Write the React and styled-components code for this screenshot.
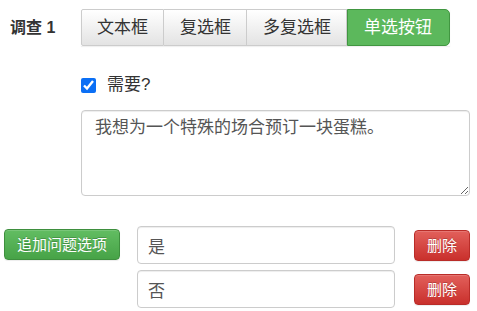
import React from 'react';
import styled, { createGlobalStyle } from 'styled-components';

const GlobalStyle = createGlobalStyle`
  body {
    margin: 0;
    background: #fff;
    font-family: "Liberation Sans", "Noto Sans CJK SC", sans-serif;
    color: #333;
  }
`;

const Page = styled.div`
  width: 477px;
  padding-top: 9px;
`;

const FormRow = styled.div`
  display: flex;
  align-items: center;
  height: 37px;
`;

const RowLabel = styled.label`
  width: 81px;
  box-sizing: border-box;
  padding-left: 10px;
  font-size: 16px;
  line-height: 20px;
  font-weight: bold;
  color: #333;
`;

const BtnGroup = styled.div`
  display: flex;
  box-shadow: 0 1px 1px rgba(0, 0, 0, 0.06);
`;

const TypeButton = styled.button`
  height: 37px;
  padding: 0 ${props => (props.$active ? 17 : 15)}px 0 ${props => (props.$first ? 15 : 16)}px;
  font-family: inherit;
  font-size: 17px;
  line-height: 35px;
  border: 1px solid ${props => (props.$active ? '#419641' : '#ccc')};
  border-left-width: ${props => (props.$first || props.$active ? 1 : 0)}px;
  color: ${props => (props.$active ? '#fff' : '#333')};
  background: ${props => (props.$active ? '#5cb85c' : 'linear-gradient(to bottom, #fff 0%, #e3e3e3 100%)')};
  border-radius: ${props => (props.$active ? '0 5px 5px 0' : props.$first ? '2px 0 0 2px' : '0')};
  cursor: pointer;
`;

const Indent = styled.div`
  margin-left: 81px;
`;

const CheckRow = styled.label`
  display: flex;
  align-items: center;
  height: 20px;
  margin-top: 29px;
  font-size: 17px;
  line-height: 20px;
  color: #333;
`;

const Check = styled.input`
  width: 15px;
  height: 15px;
  margin: 0 11px 0 0;
  accent-color: #0b6ff5;
`;

const TextArea = styled.textarea`
  display: block;
  box-sizing: border-box;
  width: 389px;
  height: 86px;
  margin-top: 15px;
  padding: 5px 13px;
  border: 1px solid #ccc;
  border-radius: 4px;
  font-family: inherit;
  font-size: 17px;
  line-height: 24px;
  color: #555;
  box-shadow: inset 0 1px 1px rgba(0, 0, 0, 0.075);
  outline: none;
`;

const OptionsSection = styled.div`
  display: flex;
  align-items: flex-start;
  margin-top: 30px;
`;

const AddColumn = styled.div`
  width: 137px;
  box-sizing: border-box;
  padding: 3px 0 0 4px;
`;

const ColorButton = styled.button`
  height: 31px;
  padding: 0 ${props => props.$pad}px;
  font-family: inherit;
  font-size: 15px;
  line-height: 29px;
  color: #fff;
  border: 1px solid ${props => (props.$danger ? '#b92c28' : '#3e8f3e')};
  border-radius: 4px;
  background: ${props =>
    props.$danger
      ? 'linear-gradient(to bottom, #e2605b 0%, #c9302c 100%)'
      : 'linear-gradient(to bottom, #62bd62 0%, #47a347 100%)'};
  box-shadow: inset 0 1px 0 rgba(255, 255, 255, 0.15), 0 1px 1px rgba(0, 0, 0, 0.075);
  text-shadow: 0 -1px 0 rgba(0, 0, 0, 0.2);
  cursor: pointer;
`;

const OptionList = styled.div`
  display: flex;
  flex-direction: column;
  gap: 6px;
`;

const OptionRow = styled.div`
  display: flex;
  align-items: center;
  height: 38px;
`;

const OptionInput = styled.input`
  box-sizing: border-box;
  width: 258px;
  height: 38px;
  margin: 0 19px 0 0;
  padding: 0 10px;
  border: 1px solid #ccc;
  border-radius: 4px;
  font-family: inherit;
  font-size: 17px;
  color: #555;
  box-shadow: inset 0 1px 1px rgba(0, 0, 0, 0.075);
  outline: none;
`;

const types = ['文本框', '复选框', '多复选框', '单选按钮'];
const options = ['是', '否'];

const App = () => (
  <Page>
    <GlobalStyle />
    <FormRow>
      <RowLabel>调查 1</RowLabel>
      <BtnGroup>
        {types.map((t, i) => (
          <TypeButton key={t} $first={i === 0} $active={i === types.length - 1}>
            {t}
          </TypeButton>
        ))}
      </BtnGroup>
    </FormRow>
    <Indent>
      <CheckRow>
        <Check type="checkbox" defaultChecked />
        需要?
      </CheckRow>
      <TextArea defaultValue="我想为一个特殊的场合预订一块蛋糕。" />
    </Indent>
    <OptionsSection>
      <AddColumn>
        <ColorButton $pad={12}>追加问题选项</ColorButton>
      </AddColumn>
      <OptionList>
        {options.map(o => (
          <OptionRow key={o}>
            <OptionInput defaultValue={o} />
            <ColorButton $danger $pad={12}>删除</ColorButton>
          </OptionRow>
        ))}
      </OptionList>
    </OptionsSection>
  </Page>
);

export default App;
